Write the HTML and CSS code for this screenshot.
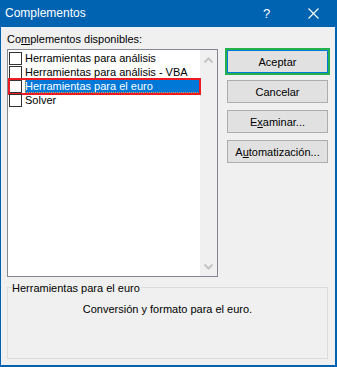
FILE: index.html
```html
<!DOCTYPE html>
<html lang="es">
<head>
<meta charset="utf-8">
<title>Complementos</title>
<link rel="stylesheet" href="styles.css">
</head>
<body>
<div class="window">
  <div class="titlebar">
    <span class="title">Complementos</span>
    <span class="help">?</span>
    <span class="close">
      <svg width="11" height="11" viewBox="0 0 11 11"><path d="M0.5 0.5 L10.5 10.5 M10.5 0.5 L0.5 10.5" stroke="#fff" stroke-width="1.1" fill="none"/></svg>
    </span>
  </div>
  <div class="client">
    <div class="top">
      <div class="left">
        <div class="label">Co<u>m</u>plementos disponibles:</div>
        <div class="listbox">
          <div class="items">
            <div class="item"><span class="check"></span><span class="text">Herramientas para análisis</span></div>
            <div class="item"><span class="check"></span><span class="text">Herramientas para análisis - VBA</span></div>
            <div class="item selected"><span class="check"></span><span class="text">Herramientas para el euro</span></div>
            <div class="item"><span class="check"></span><span class="text">Solver</span></div>
          </div>
          <div class="scrollbar">
            <svg width="17" height="17" viewBox="0 0 17 17"><path d="M4.5 10.5 L8.5 6.5 L12.5 10.5" stroke="#c4c4c4" stroke-width="2" fill="none"/></svg>
            <svg width="17" height="17" viewBox="0 0 17 17"><path d="M4.5 6.5 L8.5 10.5 L12.5 6.5" stroke="#c4c4c4" stroke-width="2" fill="none"/></svg>
          </div>
        </div>
      </div>
      <div class="buttons">
        <button class="btn default">Aceptar</button>
        <button class="btn">Cancelar</button>
        <button class="btn">E<u>x</u>aminar...</button>
        <button class="btn">A<u>u</u>tomatización...</button>
      </div>
    </div>
    <div class="group">
      <span class="group-label">Herramientas para el euro</span>
      <div class="desc">Conversión y formato para el euro.</div>
    </div>
  </div>
</div>
</body>
</html>
```
FILE: styles.css
```css
* { box-sizing: border-box; }
html, body { margin: 0; padding: 0; }
body { width: 337px; height: 367px; overflow: hidden; background: #fff; }

.window {
  width: 337px;
  height: 367px;
  background: #0063b1;
  padding: 0 2px 2px 1px;
  display: flex;
  flex-direction: column;
  font-family: "Liberation Sans", Arial, sans-serif;
  font-size: 11px;
  color: #000;
}

.titlebar {
  height: 27px;
  display: flex;
  align-items: center;
  color: #fff;
  padding-left: 4px;
}
.title { font-size: 12px; flex: 1; padding-bottom: 1px; }
.help { font-size: 13px; width: 12px; margin-right: 33px; padding-bottom: 1px; }
.close { width: 11px; height: 11px; margin-right: 16px; display: flex; margin-bottom: 1px; }

.client {
  flex: 1;
  background: #f0f0f0;
  padding: 6px 7px 0 6px;
  display: flex;
  flex-direction: column;
}

.top { display: flex; gap: 9px; }
.left { width: 211px; display: flex; flex-direction: column; }
.label { height: 13px; line-height: 13px; margin-bottom: 3px; }
.label u, .btn u { text-decoration-thickness: 1px; text-underline-offset: 1px; }

.listbox {
  height: 228px;
  border: 1px solid #828790;
  background: #fff;
  display: flex;
}
.items { flex: 1; padding-top: 1px; }
.item {
  height: 14px;
  display: flex;
  align-items: center;
  padding-left: 1px;
  position: relative;
}
.check {
  width: 13px;
  height: 13px;
  border: 1px solid #333;
  background: #fff;
  margin-right: 3px;
  flex: none;
}
.text { line-height: 14px; height: 14px; padding-left: 0; }
.item.selected .text {
  flex: 1;
  background: #0078d7;
  color: #fff;
  outline: 1px dotted #e8a040;
  outline-offset: -1px;
}
.item.selected::after {
  content: "";
  position: absolute;
  left: 0;
  top: -1px;
  right: -1px;
  bottom: -2px;
  border: 2px solid #ed1c24;
}

.scrollbar {
  width: 17px;
  background: #f0f0f0;
  display: flex;
  flex-direction: column;
  justify-content: space-between;
  padding: 2px 0 1px;
}

.buttons {
  width: 101px;
  padding-top: 17px;
  display: flex;
  flex-direction: column;
  gap: 7px;
}
.btn {
  height: 23px;
  font-family: inherit;
  font-size: 11px;
  color: #000;
  background: #e1e1e1;
  border: 1px solid #adadad;
  padding: 0;
  margin: 0;
}
.btn.default {
  border: 1px solid #0078d7;
  outline: 2px solid #22b14c;
  outline-offset: 0;
}

.group {
  position: relative;
  margin-top: 10px;
  height: 72px;
  border: 1px solid #dcdcdc;
  padding-top: 15px;
}
.group-label {
  position: absolute;
  top: -5px;
  left: 4px;
  line-height: 11px;
  background: #f0f0f0;
  padding-right: 1px;
}
.desc { text-align: center; line-height: 13px; }
```
